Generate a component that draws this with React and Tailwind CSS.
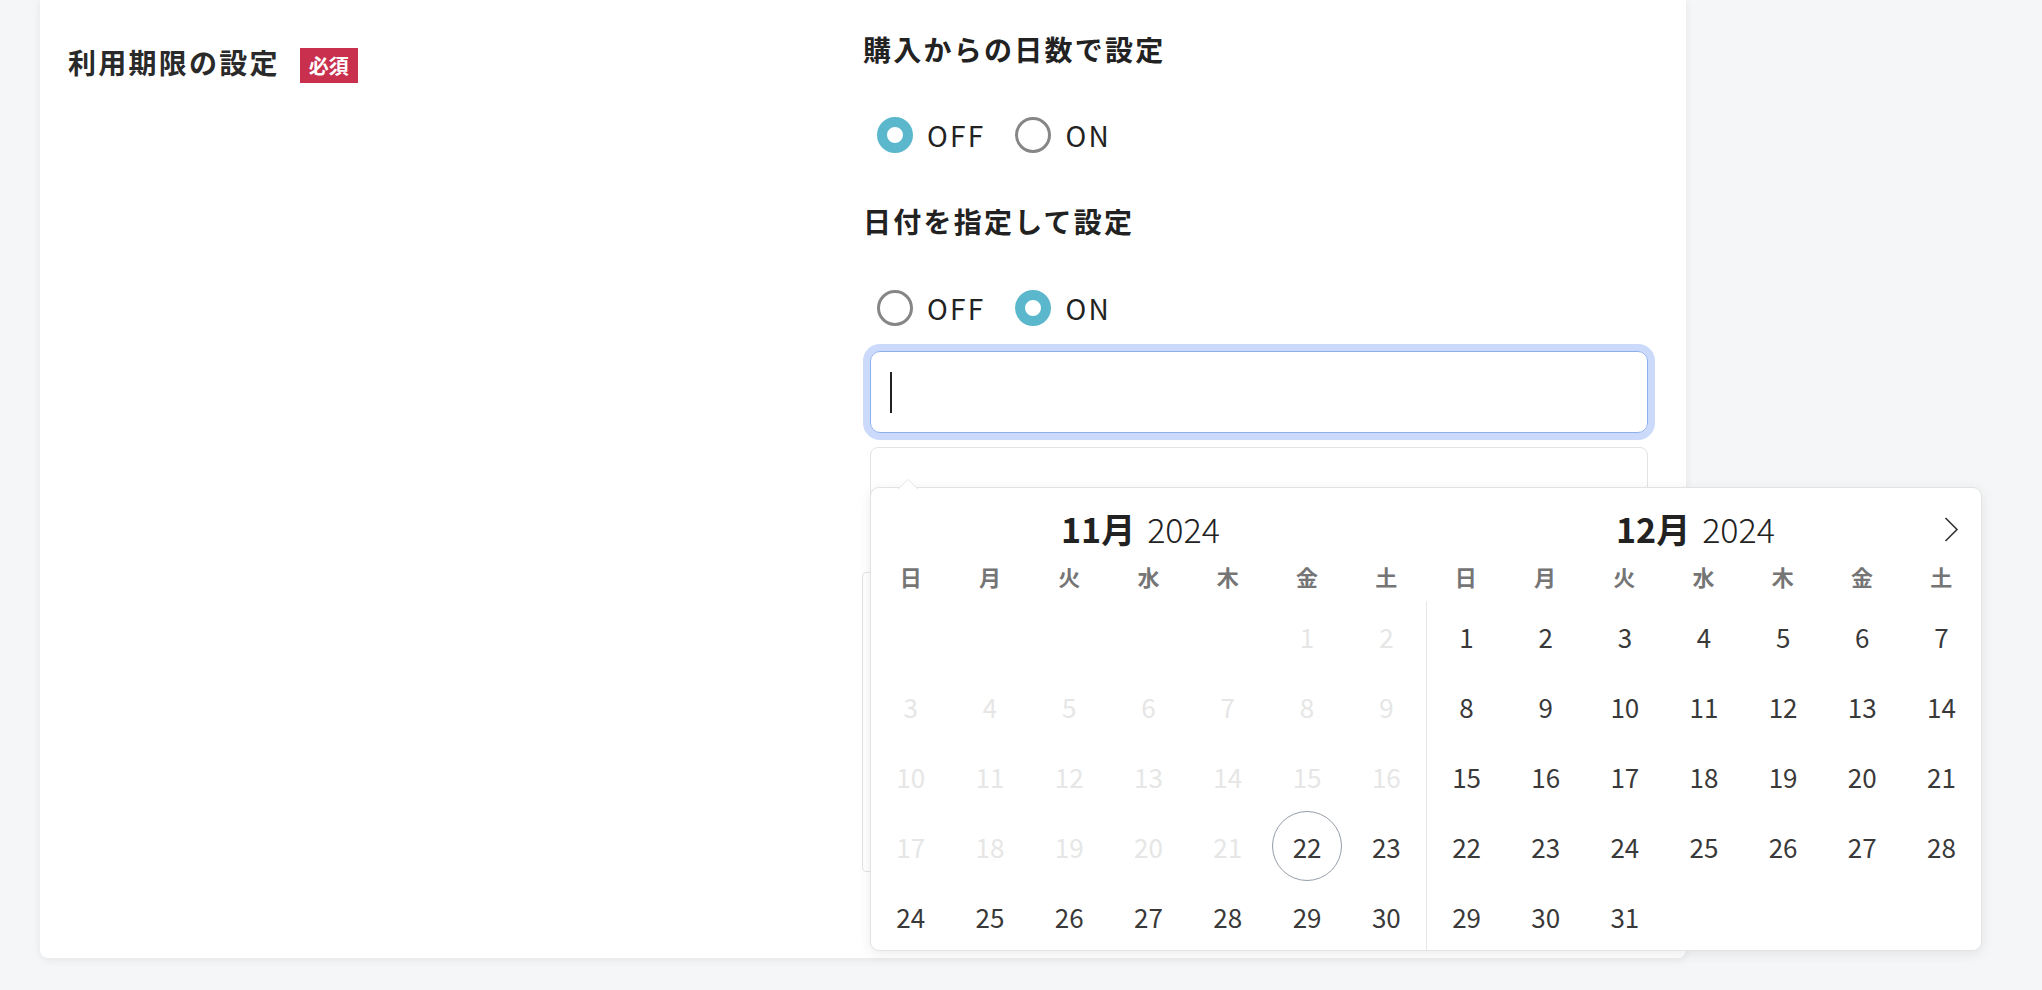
import React from 'react';

const FONT = "font-['Noto_Sans_CJK_JP','Noto_Sans',sans-serif]";

const WEEKDAYS = ['日', '月', '火', '水', '木', '金', '土'];

// build calendar rows from a leading blank count and the length of the month
const buildRows = (blanks, length) => {
  const cells = [...Array(blanks).fill(null), ...Array.from({ length }, (_, i) => i + 1)];
  while (cells.length % 7) cells.push(null);
  const rows = [];
  for (let i = 0; i < cells.length; i += 7) rows.push(cells.slice(i, i + 7));
  return rows;
};

const Radio = ({ checked, label }) => (
  <label className="flex items-center gap-[14px]">
    {checked ? (
      <span className="w-[36px] h-[36px] rounded-full border-[10px] border-[#5bb8cc] bg-white" />
    ) : (
      <span className="w-[36px] h-[36px] rounded-full border-[3px] border-[#868686] bg-white" />
    )}
    <span className="text-[28px] leading-[36px] tracking-[0.08em] text-[#222]">{label}</span>
  </label>
);

const Month = ({ month, blanks, length, disabledBefore, today, divider }) => (
  <div className="w-[555px]">
    <div className="h-[63px] flex items-center justify-center pr-[16px] pt-[18px] text-[34px] leading-none text-[#222]">
      <span className="font-bold">{month}月</span>
      <span className="ml-[12px] font-light">2024</span>
    </div>
    <div className="grid grid-cols-7 h-[50px] items-center">
      {WEEKDAYS.map((d) => (
        <span key={d} className="text-center text-[22px] font-bold text-[#757575]">
          {d}
        </span>
      ))}
    </div>
    <div className={`grid grid-cols-7 ${divider ? 'border-l border-[#e6e6e6]' : ''}`}>
      {buildRows(blanks, length).flat().map((day, i) => (
        <div key={i} className="h-[70px] flex items-center justify-center">
          {day && (
            <span
              className={`w-[70px] h-[70px] flex items-center justify-center rounded-full text-[26px] ${
                day === today ? 'border border-[#959ea9]' : ''
              } ${day < disabledBefore ? 'text-[#e6e6e6]' : 'text-[#393939]'}`}
            >
              {day}
            </span>
          )}
        </div>
      ))}
    </div>
  </div>
);

export default function App() {
  return (
    <div className={`min-h-screen bg-[#f5f6f8] pl-[40px] ${FONT}`}>
      <div className="w-[1646px] h-[958px] bg-white rounded-b-[8px] shadow-[0_2px_10px_rgba(0,0,0,0.07)] flex">
        {/* left label column */}
        <div className="w-[823px] pl-[28px] pt-[48px]">
          <div className="flex items-start gap-[20px]">
            <span className="text-[28px] leading-[35px] -mt-[3px] font-bold tracking-[0.08em] text-[#2a2a2a]">
              利用期限の設定
            </span>
            <span className="h-[35px] px-[9px] flex items-center bg-[#c8304e] text-white text-[20px] font-bold">
              必須
            </span>
          </div>
        </div>

        {/* right form column */}
        <div className="relative w-[792px] pt-[29px]">
          <h3 className="text-[28px] leading-[40px] font-bold tracking-[0.08em] text-[#222]">購入からの日数で設定</h3>
          <div className="mt-[48px] pl-[14px] flex items-center gap-[30px]">
            <Radio checked label="OFF" />
            <Radio label="ON" />
          </div>

          <h3 className="mt-[48px] text-[28px] leading-[40px] font-bold tracking-[0.08em] text-[#222]">日付を指定して設定</h3>
          <div className="mt-[49px] pl-[14px] flex items-center gap-[30px]">
            <Radio label="OFF" />
            <Radio checked label="ON" />
          </div>

          <div className="mt-[25px] mx-[7px] h-[82px] rounded-[10px] border-[1.5px] border-[#8dafef] shadow-[0_0_0_7px_#cbd9fb] flex items-center pl-[19px]">
            <span className="w-[2px] h-[41px] bg-[#222]" />
          </div>

          <div className="mt-[14px] mx-[7px] h-[110px] rounded-[8px] border border-[#e3e3e3]" />
          <div className="mt-[15px] -ml-[1px] h-[300px] rounded-[4px] border border-[#e3e3e3]" />

          {/* date picker popup */}
          <div className="absolute left-[7px] top-[487px] w-[1112px] h-[464px] bg-white rounded-[9px] border border-[#e3e3e3] shadow-[0_3px_13px_rgba(0,0,0,0.08)] flex">
            <svg className="absolute left-[27px] -top-[9px]" width="20" height="10" viewBox="0 0 20 10">
              <path d="M0 10 L10 0.5 L20 10" fill="#fff" stroke="#e3e3e3" strokeWidth="1" />
            </svg>
            <svg className="absolute right-[22px] top-[29px]" width="15" height="25" viewBox="0 0 15 25">
              <path d="M1.5 1 L13 12.5 L1.5 24" fill="none" stroke="#333" strokeWidth="1.6" />
            </svg>
            <Month month={11} blanks={5} length={30} disabledBefore={22} today={22} />
            <Month month={12} blanks={0} length={31} disabledBefore={0} divider />
          </div>
        </div>
      </div>
    </div>
  );
}
